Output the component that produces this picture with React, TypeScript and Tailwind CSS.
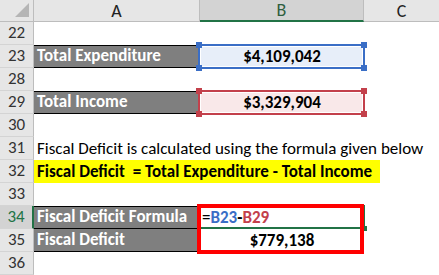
import React from 'react';

const RowHead: React.FC<{ n: number; active?: boolean }> = ({ n, active }) => (
  <div
    className={`w-[34px] shrink-0 h-full flex items-end justify-center pb-[3px] border-b border-[#d4d4d4] ${
      active
        ? 'bg-[#d3d3d3] text-[#217346] border-r-2 border-r-[#217346]'
        : 'bg-[#e6e6e6] text-[#333] border-r border-r-[#bdbdbd]'
    }`}
  >
    {n}
  </div>
);

const GrayCell: React.FC<{ label: string; top?: boolean }> = ({ label, top = true }) => (
  <div
    className={`w-[166px] shrink-0 h-full bg-[#7f7f7f] border-b border-black flex items-end pb-[3px] pl-[3px] font-bold text-white ${
      top ? 'border-t' : ''
    }`}
  >
    {label}
  </div>
);

// formula reference box (blue / red) with the little corner handles
const RefCell: React.FC<{ value: string; color: string; fill: string }> = ({ value, color, fill }) => (
  <div className="relative w-[164px] shrink-0 h-full">
    <div
      className="absolute left-[-2px] top-[-1px] w-[167px] h-[25px] border-2 p-px bg-white"
      style={{ borderColor: color }}
    >
      <div className="w-full h-full" style={{ background: fill }} />
    </div>
    {['left-[-4px] top-[-3px]', 'left-[161px] top-[-3px]', 'left-[-4px] top-[20px]', 'left-[161px] top-[20px]'].map((pos) => (
      <div key={pos} className={`absolute w-[6px] h-[6px] ${pos}`} style={{ background: color }} />
    ))}
    <div className="relative h-full flex items-end pb-[3px] justify-center font-bold text-black">{value}</div>
  </div>
);

const App: React.FC = () => {
  return (
    <div className="w-[439px] h-[275px] overflow-hidden bg-white font-[Carlito,Lato,sans-serif] text-[17px] leading-none text-black">
      {/* column headers */}
      <div className="flex h-[22px]">
        <div className="relative w-[34px] shrink-0 bg-[#e6e6e6] border-r border-b border-[#bdbdbd]">
          <div className="absolute right-[4px] bottom-[4px] w-0 h-0 border-l-[14px] border-l-transparent border-b-[14px] border-b-[#b5b5b5]" />
        </div>
        <div className="w-[166px] shrink-0 bg-[#e6e6e6] border-r border-b border-[#bdbdbd] flex items-center justify-center text-[18px] text-[#222]">
          A
        </div>
        <div className="w-[164px] shrink-0 bg-[#d3d3d3] border-r border-r-[#bdbdbd] border-b-2 border-b-[#217346] flex items-center justify-center text-[18px] text-[#2f5f3f]">
          B
        </div>
        <div className="flex-1 bg-[#e6e6e6] border-b border-[#bdbdbd] flex items-center justify-center text-[18px] text-[#222]">
          C
        </div>
      </div>

      {/* 22 */}
      <div className="flex h-[23px]">
        <RowHead n={22} />
      </div>

      {/* 23 */}
      <div className="flex h-[23px]">
        <RowHead n={23} />
        <GrayCell label="Total Expenditure" />
        <RefCell value="$4,109,042" color="#3a6ec6" fill="#e7eef9" />
      </div>

      {/* 28 */}
      <div className="flex h-[23px]">
        <RowHead n={28} />
      </div>

      {/* 29 */}
      <div className="flex h-[23px]">
        <RowHead n={29} />
        <GrayCell label="Total Income" />
        <RefCell value="$3,329,904" color="#c3404b" fill="#f9e8e9" />
      </div>

      {/* 30 */}
      <div className="flex h-[23px]">
        <RowHead n={30} />
      </div>

      {/* 31 */}
      <div className="flex h-[23px]">
        <RowHead n={31} />
        <div className="flex items-end pb-[3px] pl-[3px] whitespace-nowrap">
          Fiscal Deficit is calculated using the formula given below
        </div>
      </div>

      {/* 32 */}
      <div className="flex h-[23px]">
        <RowHead n={32} />
        <div className="w-[346px] shrink-0 bg-[#ffff00] flex items-end pb-[3px] pl-[3px] font-bold whitespace-pre">
          Fiscal Deficit  = Total Expenditure - Total Income
        </div>
      </div>

      {/* 33 */}
      <div className="flex h-[23px]">
        <RowHead n={33} />
      </div>

      {/* 34 */}
      <div className="flex h-[23px]">
        <RowHead n={34} active />
        <GrayCell label="Fiscal Deficit Formula" />
        <div className="relative w-[164px] shrink-0 h-full">
          {/* active cell border */}
          <div className="absolute left-[-1px] top-[-1px] w-[166px] h-[24px] border-r-2 border-b-2 border-[#217346]" />
          <div className="absolute left-[162px] top-[20px] w-[5px] h-[5px] bg-[#217346]" />
          <div className="relative h-full flex items-end pb-[3px] pl-[2px] font-bold">
            <span className="font-normal">=</span>
            <span className="text-[#3a6ec6]">B23</span>
            <span>-</span>
            <span className="text-[#c3404b]">B29</span>
          </div>
          {/* red annotation box over B34:B35 */}
          <div className="absolute z-10 left-[-3px] top-[-2px] w-[167px] h-[50px] border-4 border-[#ff0000]" />
        </div>
      </div>

      {/* 35 */}
      <div className="flex h-[23px]">
        <RowHead n={35} />
        <GrayCell label="Fiscal Deficit" top={false} />
        <div className="w-[164px] shrink-0 h-full flex items-end pb-[3px] justify-center font-bold">$779,138</div>
      </div>

      {/* 36 */}
      <div className="flex h-[23px]">
        <RowHead n={36} />
      </div>
    </div>
  );
};

export default App;
